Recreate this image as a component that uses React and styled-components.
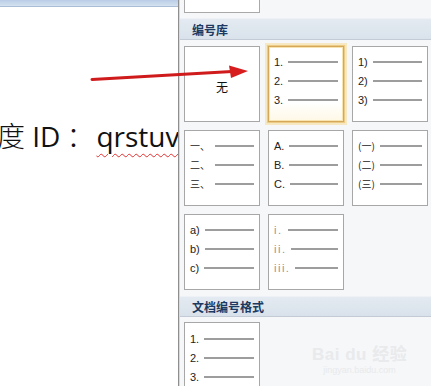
import React from "react";
import styled, { createGlobalStyle, css } from "styled-components";

const Global = createGlobalStyle`
  html, body { margin: 0; padding: 0; background: #ffffff; }
  body { font-family: "Liberation Sans", "Noto Sans CJK SC", sans-serif; }
`;

const Page = styled.div`
  position: relative;
  width: 431px;
  height: 386px;
  display: flex;
  overflow: hidden;
  background: #ffffff;
`;

const Doc = styled.div`
  width: 178px;
  flex: none;
  display: flex;
  flex-direction: column;
  border-right: 1px solid #8e8e8e;
  overflow: hidden;
`;

const TopStrip = styled.div`
  height: 6px;
  flex: none;
  background: linear-gradient(#b9cde6, #d4e1f0);
  border-bottom: 1px solid #a9bdd6;
`;

const DocBody = styled.div`
  flex: 1;
  padding-top: 108px;
  background: #ffffff;
`;

const DocLine = styled.div`
  white-space: nowrap;
  font-family: "Open Sans", "Noto Sans CJK SC", sans-serif;
  font-size: 28px;
  line-height: 40px;
  color: #111111;
  margin-left: -3px;
`;

const Cjk = styled.span`
  font-family: "Noto Sans CJK SC", sans-serif;
  font-weight: 300;
`;

const Colon = styled(Cjk)`
  padding-left: 6px;
  margin-right: 2px;
`;

const Misspelled = styled.span`
  text-decoration: underline wavy #e03030;
  text-decoration-thickness: 1px;
  text-underline-offset: 6px;
`;

const Panel = styled.div`
  flex: 1;
  display: flex;
  flex-direction: column;
  background: #f6f7f8;
  border-left: 1px solid #d6dade;
  overflow: hidden;
  & > * {
    flex-shrink: 0;
  }
`;

const Stub = styled.div`
  margin-left: 4px;
  width: 76px;
  height: 13px;
  box-sizing: border-box;
  background: #ffffff;
  border: 1px solid #a9a9a9;
  border-top: none;
`;

const Header = styled.div`
  margin-top: ${(p) => p.$top}px;
  height: ${(p) => p.$h}px;
  box-sizing: border-box;
  display: flex;
  align-items: center;
  padding-left: 12px;
  background: linear-gradient(#e3eaf1, #d9e2eb);
  border-top: 1px solid #eef2f6;
  border-bottom: 1px solid #c3ccd6;
  font-family: "Noto Sans CJK SC", sans-serif;
  font-weight: 700;
  font-size: 12px;
  color: #1c3961;
`;

const Grid = styled.div`
  margin-top: ${(p) => p.$top}px;
  padding-left: 4px;
  display: grid;
  grid-template-columns: repeat(3, 76px);
  grid-auto-rows: 76px;
  gap: 8px;
`;

const Cell = styled.div`
  box-sizing: border-box;
  background: #ffffff;
  border: 1px solid #a7a7a7;
  padding: ${(p) => p.$padTop ?? 5}px 5px 0 5px;
  display: flex;
  flex-direction: column;
  ${(p) =>
    p.$center &&
    css`
      align-items: center;
      justify-content: center;
      padding: 0;
    `}
  ${(p) =>
    p.$selected &&
    css`
      border: 1px solid #d4a85a;
      background: linear-gradient(#ffffff 75%, #fff8e6);
      box-shadow: 0 0 0 1px #eccb86, 0 0 0 3px rgba(247, 222, 160, 0.6),
        inset 0 0 0 1px #f8e4b0;
    `}
`;

const NoneLabel = styled.span`
  font-family: "Noto Sans CJK SC", sans-serif;
  font-size: 12px;
  color: #111;
  margin-top: 4px;
`;

const Row = styled.div`
  height: 19px;
  display: flex;
  align-items: center;
  gap: 5px;
`;

const Label = styled.span`
  flex: none;
  font-family: ${(p) =>
    p.$cjk ? '"Noto Sans CJK SC", sans-serif' : '"Liberation Sans", sans-serif'};
  font-size: ${(p) => (p.$cjk ? 10 : 11)}px;
  color: ${(p) => (p.$light ? "#939393" : "#222222")};
  letter-spacing: ${(p) => (p.$spaced ? 1.5 : 0)}px;
`;

const Dash = styled.div`
  flex: 1;
  height: 2px;
  background: #9d9d9d;
`;

const Overlay = styled.svg`
  position: absolute;
  left: 0;
  top: 0;
  pointer-events: none;
`;

const Watermark = styled.div`
  position: absolute;
  left: 312px;
  top: 340px;
  display: flex;
  flex-direction: column;
  align-items: center;
  color: #e8eaec;
  font-family: "Liberation Sans", "Noto Sans CJK SC", sans-serif;
  pointer-events: none;
`;

const WmTop = styled.div`
  font-size: 17px;
  font-weight: 700;
  letter-spacing: 0.5px;
`;

const WmBottom = styled.div`
  font-size: 9px;
`;

const List = ({ labels, cjk, light, spaced }) =>
  labels.map((l) => (
    <Row key={l}>
      <Label $cjk={cjk} $light={light} $spaced={spaced}>
        {l}
      </Label>
      <Dash />
    </Row>
  ));

export default function App() {
  return (
    <>
      <Global />
      <Page>
        <Doc>
          <TopStrip />
          <DocBody>
            <DocLine>
              <Cjk>度</Cjk> ID<Colon>：</Colon>
              <Misspelled>qrstuvwxyz</Misspelled>
            </DocLine>
          </DocBody>
        </Doc>
        <Panel>
          <Stub />
          <Header $top={5} $h={22}>编号库</Header>
          <Grid $top={6}>
            <Cell $center>
              <NoneLabel>无</NoneLabel>
            </Cell>
            <Cell $selected>
              <List labels={["1.", "2.", "3."]} />
            </Cell>
            <Cell>
              <List labels={["1)", "2)", "3)"]} />
            </Cell>
            <Cell>
              <List labels={["一、", "二、", "三、"]} cjk />
            </Cell>
            <Cell>
              <List labels={["A.", "B.", "C."]} />
            </Cell>
            <Cell>
              <List labels={["(一)", "(二)", "(三)"]} cjk />
            </Cell>
            <Cell>
              <List labels={["a)", "b)", "c)"]} />
            </Cell>
            <Cell>
              <List labels={["i.", "ii.", "iii."]} light spaced />
            </Cell>
          </Grid>
          <Header $top={6} $h={21}>文档编号格式</Header>
          <Grid $top={5}>
            <Cell $padTop={6}>
              <List labels={["1.", "2.", "3."]} />
            </Cell>
          </Grid>
        </Panel>
        <Watermark>
          <WmTop>Bai du 经验</WmTop>
          <WmBottom>jingyan.baidu.com</WmBottom>
        </Watermark>
        <Overlay width="431" height="386" viewBox="0 0 431 386">
          <path d="M92 79.5 L232 71.5" stroke="#cf1b1b" strokeWidth="3" strokeLinecap="round" />
          <polygon points="229,65.5 248,71 231,78" fill="#d71d1d" />
        </Overlay>
      </Page>
    </>
  );
}
